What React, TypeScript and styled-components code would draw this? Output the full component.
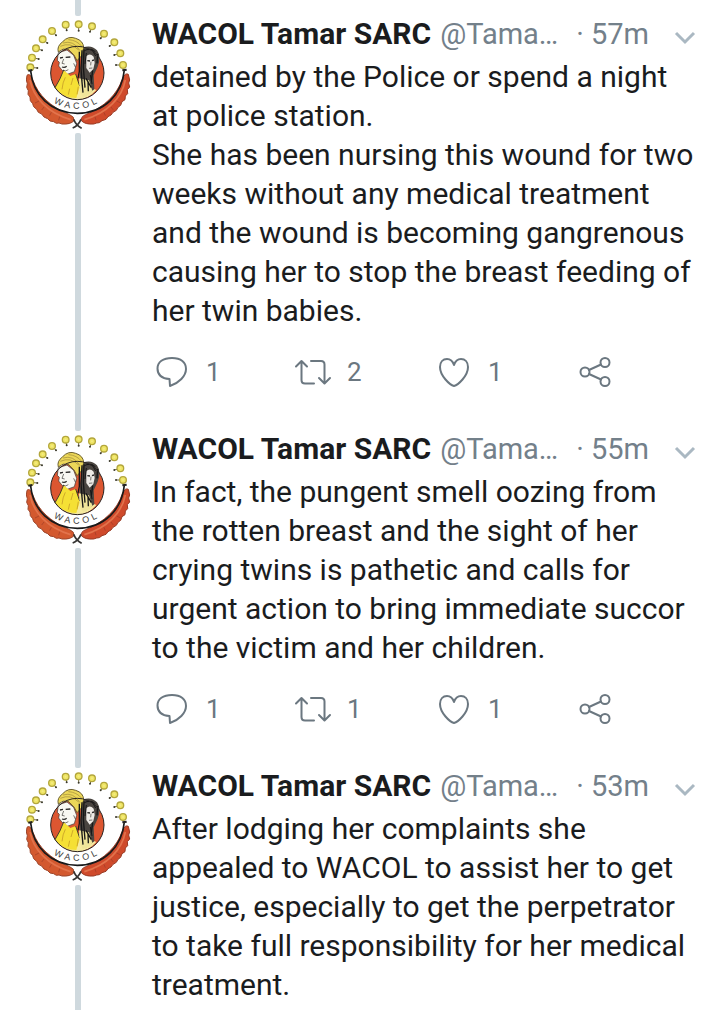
import React from "react";
import styled, { createGlobalStyle } from "styled-components";

const GlobalStyle = createGlobalStyle`
  * { box-sizing: border-box; }
  body {
    margin: 0;
    background: #fff;
    color: #1a1c1e;
    font-family: Roboto, "Liberation Sans", sans-serif;
  }
`;

const Thread = styled.main`
  display: flex;
  flex-direction: column;
  min-height: 100vh;
`;

const Tweet = styled.article<{ $last: boolean }>`
  display: flex;
  flex-grow: ${(p) => (p.$last ? 1 : 0)};
`;

const Rail = styled.div`
  display: flex;
  flex-direction: column;
  align-items: center;
  flex: none;
  width: 152px;
  padding: 0 4px 0 8px;
`;

const Line = styled.span<{ $grow?: boolean }>`
  width: 6px;
  height: ${(p) => (p.$grow ? "auto" : "16px")};
  flex: ${(p) => (p.$grow ? "1" : "none")};
  border-radius: ${(p) => (p.$grow ? "2px 2px 0 0" : "0 0 2px 2px")};
  background: #cfd9de;
`;

const Avatar = styled.a`
  display: block;
  height: 110px;
  margin: 3px 0 4px;
`;

const Content = styled.div`
  flex: 1;
  min-width: 0;
  padding: 14px 4px 0 0;
`;

const Header = styled.header`
  display: flex;
  align-items: center;
  padding-right: 20px;
  font-size: 29px;
  line-height: 40px;
  white-space: nowrap;
`;

const Name = styled.h2`
  margin: 0;
  font-size: 30px;
  font-weight: 700;
`;

const Handle = styled.span`
  margin-left: 9px;
  color: #73808a;
`;

const Time = styled.time`
  margin-left: auto;
  color: #73808a;
`;

const IconButton = styled.button`
  display: flex;
  margin-left: 25px;
  padding: 8px 0 0;
  border: 0;
  background: none;
  color: #aab8c2;
`;

const Body = styled.p`
  margin: 3px 0 0;
  font-size: 30px;
  line-height: 39px;
  white-space: pre-line;
`;

const Actions = styled.div`
  display: grid;
  grid-template-columns: repeat(4, 1fr);
  padding: 22px 0 23px;
`;

const Action = styled.button`
  display: flex;
  align-items: center;
  gap: 14px;
  height: 40px;
  padding: 0;
  border: 0;
  background: none;
  color: #6b7780;
  font-family: inherit;
  font-size: 26px;
  line-height: 40px;
`;

const Glyph = styled.svg`
  display: block;
  width: 40px;
  height: 40px;
  fill: none;
  stroke: currentColor;
  stroke-width: 2;
  stroke-linecap: round;
  stroke-linejoin: round;
`;

const ReplyIcon = () => (
  <Glyph viewBox="0 0 40 40">
    <path d="M17.500 27 C10 26.500 5.500 23 5.500 16.500 C5.500 10 11 6 20 6 C29 6 34 10.500 34 17 C34 24 27 31 18 34 Z" />
  </Glyph>
);

const RetweetIcon = () => (
  <Glyph viewBox="0 0 40 40">
    <path d="M3 14.500 L8.500 9 L14 14.500 M8.500 10 V28 Q8.500 31.500 12 31.500 H21 M18 9 H28 Q31.500 9 31.500 12.500 V31 M26 26 L31.500 31.500 L37 26" />
  </Glyph>
);

const HeartIcon = () => (
  <Glyph viewBox="0 0 40 40">
    <path d="M20 34 C16 33 6 24 6 15 C6 10 9 7 13 7 C17 7 19 10 20 13 C21 10 23 7 27 7 C31 7 34 10 34 15 C34 24 24 33 20 34 Z" />
  </Glyph>
);

const ShareIcon = () => (
  <Glyph viewBox="0 0 40 40">
    <circle cx="10" cy="20" r="4.500" />
    <circle cx="30" cy="10.500" r="4.500" />
    <circle cx="30" cy="29.500" r="4.500" />
    <path d="M14 18 L26 12.500 M14 22 L26 27.500" />
  </Glyph>
);

const bulbs: [number, number, number, number][] = [
  [60, 202, 21, 2], [65, 173, 20, 4], [77, 145, 18, 6], [97, 118, 14, 11],
  [125, 93, 12, 13], [166, 74, 3, 17], [205, 73, 0, 19], [245, 79, -6, 16],
  [281, 101, -10, 14], [312, 127, -14, 11], [330, 160, -18, 5], [338, 195, -21, 0],
];

const Logo = ({ id }: { id: string }) => (
  <svg width="105" height="110" viewBox="47 57 315 330" fill="none" role="img" aria-label="WACOL">
    {bulbs.map(([x, y, dx, dy]) => (
      <g key={x}>
        <path d={`M${x} ${y} l${dx} ${dy}`} stroke="#6b6540" strokeWidth="3" />
        <circle cx={x + dx} cy={y + dy} r="3" fill="#3c3a2c" />
        <circle cx={x} cy={y} r="10" fill="#efe564" stroke="#b3a63c" strokeWidth="4" />
        <circle cx={x} cy={y} r="3" fill="#f3ea86" />
      </g>
    ))}
    <path d="M50 226 C57 219 64 229 68 241 C83 284 120 321 178 344 Q193 350 191 362 Q180 374 155 372 L146 369 L138 370 L130 365 L119 363 L112 356 L101 351 L94 342 L84 337 L79 328 L70 320 L67 311 L60 302 L59 291 L53 283 L54 272 L49 262 L51 251 L48 240 Z" fill="#d3592f" stroke="#9c4429" strokeWidth="3" />
    <path d="M354 223 C345 218 338 229 335 239 C321 282 283 321 226 344 Q210 351 213 362 Q224 374 250 372 L259 369 L267 368 L275 362 L287 358 L293 350 L302 345 L308 337 L318 331 L323 322 L331 316 L335 305 L344 299 L345 288 L352 281 L351 269 L358 261 L355 249 L358 240 Z" fill="#cf4a2b" stroke="#983a24" strokeWidth="3" />
    <path d="M59 240 C69 293 112 339 181 359 M345 240 C335 293 292 339 222 359" stroke="#e2734c" strokeWidth="5" />
    <path d="M74 309 L86 303 M94 330 L101 321 M118 347 L123 337 M145 361 L148 350 M331 309 L319 303 M309 330 L302 321 M285 347 L281 337 M257 361 L254 350" stroke="#9b3d27" strokeWidth="2" />
    <path d="M61 213 C68 284 120 338 201 340 C284 338 335 283 342 210" stroke="#17191a" strokeWidth="5" />
    <path d="M54 212 L66 210 M336 211 L349 209" stroke="#222" strokeWidth="6" />
    <path d="M187 384 Q203 378 212 358 M214 385 Q198 377 190 358" stroke="#353432" strokeWidth="5" />

    <circle cx="201" cy="219" r="80" fill="#dc5631" />
    <path d="M135 265 Q200 240 258 270 Q233 299 201 299 Q165 299 135 265 Z" fill="#f6eaa0" />
    <path d="M217 143 Q243 133 260 151 Q274 171 262 200 L250 226 L252 268 L228 286 L206 248 Z" fill="#4a4540" />
    <path d="M228 169 Q238 158 250 170 L253 189 L249 207 L238 218 L228 204 Z" fill="#eeebe6" />
    <path d="M144 158 L170 150 L190 166 L199 190 L192 215 L168 224 L153 208 L145 198 L147 187 L141 181 Z" fill="#f8f8f2" stroke="#353432" strokeWidth="2" />
    <path d="M144 156 Q139 139 156 126 Q174 106 196 115 Q219 122 220 143 L215 166 L200 182 Q194 164 174 148 Q157 143 144 156 Z" fill="#ecd758" stroke="#6c602f" strokeWidth="3" />
    <path d="M160 210 Q151 236 134 263 Q157 294 198 294 L209 259 L196 222 L180 228 Z" fill="#f5e035" />
    <path d="M160 210 Q151 236 134 263 M196 222 L208 258" stroke="#454029" strokeWidth="3" />
    <path d="M206 235 Q205 265 217 291 Q237 287 246 272 L236 241 Z" fill="#f0e59a" />
    <path d="M207 155 L207 214 L203 235 M215 151 L212 205 L215 243 M221 148 L219 201 L224 263 M262 162 L260 190 M247 212 L243 242 M227 235 L243 263 M214 236 L218 278 M233 246 L234 274" stroke="#171717" strokeWidth="4" />
    <path d="M222 152 Q238 143 255 155 M228 159 L224 192 M244 147 L256 168 M240 225 L245 252" stroke="#171717" strokeWidth="3" />
    <path d="M150 139 Q180 125 205 150 M158 129 Q189 119 209 152 M174 119 Q199 120 215 140" stroke="#9b863a" strokeWidth="2" />
    <path d="M149 174 L158 172 M166 172 L180 171 M155 201 Q163 204 169 199 M231 182 L239 183 M245 182 L251 180" stroke="#292827" strokeWidth="4" />
    <path d="M160 177 L155 190 L163 192 M158 210 Q166 216 174 209 M242 185 L241 196 M236 205 L246 204 M190 190 L195 201" stroke="#383632" strokeWidth="2" />
    <path d="M165 232 Q157 247 155 268 M188 234 L182 255 M178 266 L174 284 M204 260 L200 283" stroke="#cfaa2a" strokeWidth="3" />
    <circle cx="201" cy="219" r="80" stroke="#292422" strokeWidth="3" />
    <path id={id} d="M130 307 Q200 349 276 301" />
    <text fill="#3e3e3e" fontFamily="Liberation Sans, sans-serif" fontSize="27" letterSpacing="10">
      <textPath href={`#${id}`}>WACOL</textPath>
    </text>
  </svg>
);

interface TweetData {
  time: string;
  text: string;
  counts?: [number, number, number];
}

const tweets: TweetData[] = [
  {
    time: "57m",
    text: "detained by the Police or spend a night\nat police station.\nShe has been nursing this wound for two\nweeks without any medical treatment\nand the wound is becoming gangrenous\ncausing her to stop the breast feeding of\nher twin babies.",
    counts: [1, 2, 1],
  },
  {
    time: "55m",
    text: "In fact, the pungent smell oozing from\nthe rotten breast and the sight of her\ncrying twins is pathetic and calls for\nurgent action to bring immediate succor\nto the victim and her children.",
    counts: [1, 1, 1],
  },
  {
    time: "53m",
    text: "After lodging her complaints she\nappealed to WACOL to assist her to get\njustice, especially to get the perpetrator\nto take full responsibility for her medical\ntreatment.",
  },
];

export default function App() {
  return (
    <>
      <GlobalStyle />
      <Thread>
        {tweets.map((t, i) => (
          <Tweet key={t.time} $last={i === tweets.length - 1}>
            <Rail>
              <Line />
              <Avatar href="#profile">
                <Logo id={`motto-${i}`} />
              </Avatar>
              <Line $grow />
            </Rail>
            <Content>
              <Header>
                <Name>WACOL Tamar SARC</Name>
                <Handle>@Tama…</Handle>
                <Time>· {t.time}</Time>
                <IconButton aria-label="More options">
                  <svg width="22" height="16" viewBox="0 0 22 16" fill="none" stroke="currentColor" strokeWidth="3">
                    <path d="M2 3 L11 12 L20 3" />
                  </svg>
                </IconButton>
              </Header>
              <Body>{t.text}</Body>
              {t.counts && (
                <Actions>
                  <Action aria-label="Reply"><ReplyIcon />{t.counts[0]}</Action>
                  <Action aria-label="Retweet"><RetweetIcon />{t.counts[1]}</Action>
                  <Action aria-label="Like"><HeartIcon />{t.counts[2]}</Action>
                  <Action aria-label="Share"><ShareIcon /></Action>
                </Actions>
              )}
            </Content>
          </Tweet>
        ))}
      </Thread>
    </>
  );
}
